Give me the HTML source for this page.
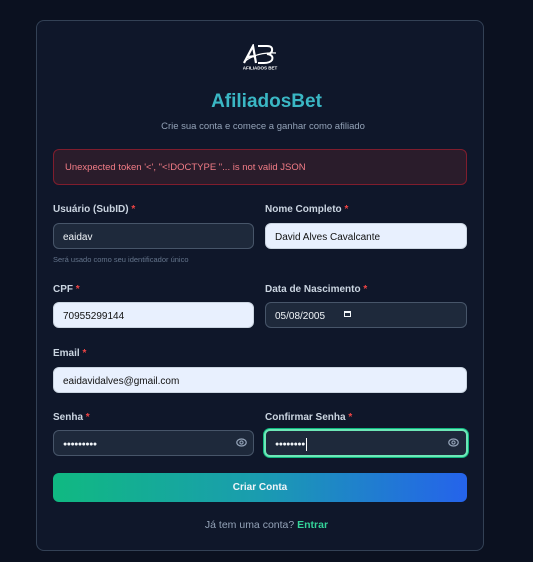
<!DOCTYPE html>
<html><head><meta charset="utf-8"><style>
*{box-sizing:border-box;margin:0;padding:0}
body{width:533px;height:562px;background:#0b1120;font-family:"Liberation Sans",sans-serif;position:relative;overflow:hidden}
.card{position:absolute;left:36px;top:20px;width:448px;height:531px;background:#0f172a;border:1px solid #334155;border-radius:8px}
.abs{position:absolute}
.lbl{position:absolute;font-size:10px;font-weight:bold;color:#cbd5e1}
.lbl span{color:#ef4444}
.inp{position:absolute;height:26px;border-radius:6px;font-size:10px;padding-left:9px;display:flex;align-items:center;padding-top:2px;border:1px solid #475569}
.dark{background:#1e293b;color:#f1f5f9}
.light{background:#e8f0fe;color:#111;border-color:#cbd5e1}
.pw{font-size:7px;letter-spacing:-0.5px}
</style></head><body>
<div class="card"></div>
<svg class="abs" style="left:242px;top:44px" width="36" height="27" viewBox="0 0 36 27">
<path d="M2 19 L11 2 L14 19 M5 13 L14 12" stroke="#fff" stroke-width="2.2" fill="none"/>
<path d="M16 2 H25 Q31 2 30 7 Q29 10 25 10 Q32 11 30 16 Q28 19 22 19 H16" stroke="#fff" stroke-width="2" fill="none"/>
<path d="M2 18 Q14 8 34 9" stroke="#fff" stroke-width="1.2" fill="none"/>
<text x="18" y="25.5" font-size="4.5" font-weight="bold" fill="#fff" text-anchor="middle" font-family="Liberation Sans">AFILIADOS BET</text>
</svg>
<div class="abs" style="left:0;width:533px;top:91px;text-align:center;font-size:19px;font-weight:bold;color:#3ab7c4">AfiliadosBet</div>
<div class="abs" style="left:0;width:520px;top:121px;text-align:center;font-size:9.5px;color:#94a3b8;padding-left:6px">Crie sua conta e comece a ganhar como afiliado</div>
<div class="abs" style="left:53px;top:149px;width:414px;height:36px;background:#2a1c2b;border:1px solid #7f1d2d;border-radius:6px;color:#f27c86;font-size:9.5px;line-height:36px;padding-left:11px">Unexpected token '&lt;', "&lt;!DOCTYPE "... is not valid JSON</div>

<div class="lbl" style="left:53px;top:204px">Usuário (SubID) <span>*</span></div>
<div class="inp dark" style="left:53px;top:223px;width:201px">eaidav</div>
<div class="abs" style="left:53px;top:255px;font-size:7.5px;color:#64748b">Será usado como seu identificador único</div>
<div class="lbl" style="left:265px;top:204px">Nome Completo <span>*</span></div>
<div class="inp light" style="left:265px;top:223px;width:202px">David Alves Cavalcante</div>

<div class="lbl" style="left:53px;top:284px">CPF <span>*</span></div>
<div class="inp light" style="left:53px;top:302px;width:201px">70955299144</div>
<div class="lbl" style="left:265px;top:284px">Data de Nascimento <span>*</span></div>
<div class="inp dark" style="left:265px;top:302px;width:202px">05/08/2005<span style="position:absolute;left:78px;top:8px;width:7px;height:6px;border:1px solid #f1f5f9;border-top-width:2px"></span></div>

<div class="lbl" style="left:53px;top:348px">Email <span>*</span></div>
<div class="inp light" style="left:53px;top:367px;width:414px">eaidavidalves@gmail.com</div>

<div class="lbl" style="left:53px;top:412px">Senha <span>*</span></div>
<div class="inp dark pw" style="left:53px;top:430px;width:201px">●●●●●●●●●</div>
<div class="lbl" style="left:265px;top:412px">Confirmar Senha <span>*</span></div>
<div class="inp dark pw" style="left:264px;top:429px;width:204px;height:28px;border:2px solid #6ee7b7;box-shadow:0 0 0 1px #10b981">●●●●●●●●<span style="display:inline-block;width:1px;height:13px;background:#fff;margin-left:1px"></span></div>
<svg class="abs" style="left:236px;top:438px" width="11" height="9" viewBox="0 0 11 9"><ellipse cx="5.5" cy="4.5" rx="4.7" ry="3.5" fill="none" stroke="#94a3b8" stroke-width="1.2"/><circle cx="5.5" cy="4.5" r="1.6" fill="none" stroke="#94a3b8" stroke-width="1.1"/></svg>
<svg class="abs" style="left:448px;top:438px" width="11" height="9" viewBox="0 0 11 9"><ellipse cx="5.5" cy="4.5" rx="4.7" ry="3.5" fill="none" stroke="#94a3b8" stroke-width="1.2"/><circle cx="5.5" cy="4.5" r="1.6" fill="none" stroke="#94a3b8" stroke-width="1.1"/></svg>

<div class="abs" style="left:53px;top:473px;width:414px;height:29px;border-radius:6px;background:linear-gradient(90deg,#10b981,#1a9cb0 50%,#2563eb);color:#f1f5f9;font-size:10px;font-weight:bold;text-align:center;line-height:30px">Criar Conta</div>
<div class="abs" style="left:0;width:533px;top:519px;text-align:center;font-size:10.5px;color:#94a3b8">Já tem uma conta? <b style="color:#34d399">Entrar</b></div>
</body></html>
